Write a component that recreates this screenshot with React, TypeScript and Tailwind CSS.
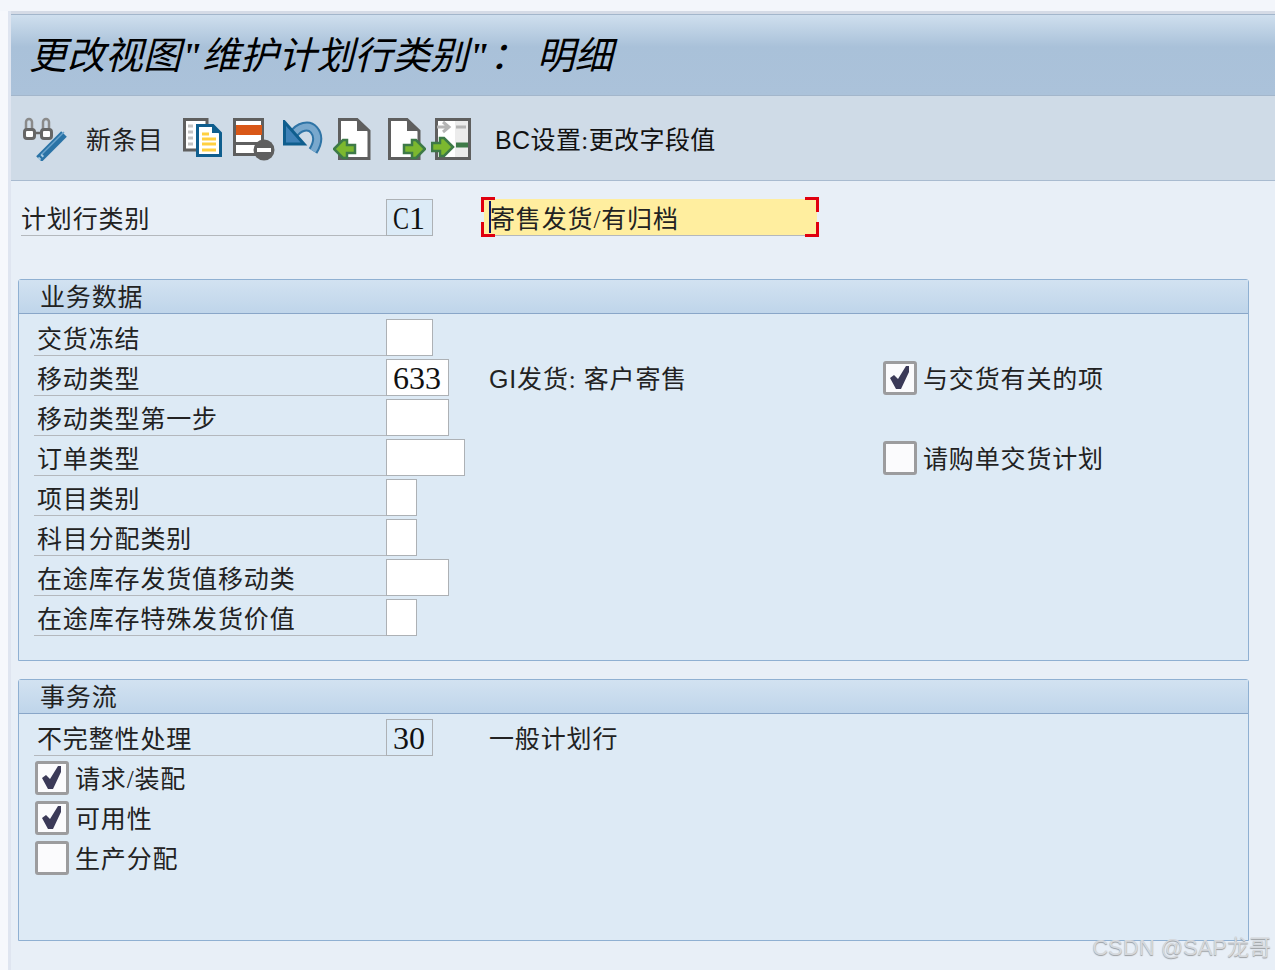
const labelLine = "border-b border-[#b4b8bd]";
const sans = "[font-family:'Liberation_Sans',sans-serif]";

function DocShape() {
  return (
    <>
      <path d="M6.5 1.5H24L36 13V40.5H6.5Z" fill="#fff" stroke="#5f5f5f" strokeWidth="3" />
      <path d="M24 1.5V13H36Z" fill="#5f5f5f" />
    </>
  );
}

function GreenArrow({ x, y, left }: { x: number; y: number; left?: boolean }) {
  const d = left
    ? "M0 11 9 2H13V7H21V15H13V20H9Z"
    : "M21 11 12 2H8V7H0V15H8V20H12Z";
  return (
    <g transform={`translate(${x} ${y})`}>
      <path d={d} fill="#7cb82f" stroke="#3e7a48" strokeWidth="2.5" />
    </g>
  );
}

function DisplayIcon() {
  return (
    <svg width="44" height="44" viewBox="0 0 44 44" className="mt-[-1px]">
      <path d="M3 12V5a3 3 0 0 1 6 0v7M20 12V5a3 3 0 0 1 6 0v7" fill="none" stroke="#8a8a8a" strokeWidth="2.5" />
      <rect x="1.5" y="12.5" width="10" height="9" rx="2.5" fill="#fff" stroke="#666" strokeWidth="3" />
      <rect x="18.5" y="12.5" width="10" height="9" rx="2.5" fill="#fff" stroke="#666" strokeWidth="3" />
      <path d="M11 16H19" stroke="#666" strokeWidth="2.5" />
      <path d="M41 17 16 42" stroke="#2a73a6" strokeWidth="8" />
      <path d="M41 15 18 38" stroke="#6aa3cc" strokeWidth="1.5" />
      <path d="M20 38 15 43" stroke="#a9cbe2" strokeWidth="3" strokeDasharray="2 2" />
    </svg>
  );
}

function CopyIcon() {
  return (
    <svg width="40" height="40" viewBox="0 0 40 40">
      <path d="M1.5 1.5H24V32H1.5Z" fill="#fff" stroke="#5f5f5f" strokeWidth="3" />
      <path d="M5 8H10M5 14H10M5 20H10M5 26H10" stroke="#c4c4c4" strokeWidth="3" />
      <path d="M14.5 7.5H30L37.5 15V37.5H14.5Z" fill="#fff" stroke="#0f5e8e" strokeWidth="3" />
      <path d="M29 6V15H38Z" fill="#0f5e8e" />
      <path d="M19 16H26M19 21H33M19 26H33M19 32H33" stroke="#ffd040" strokeWidth="3" />
    </svg>
  );
}

function DeleteIcon() {
  return (
    <svg width="43" height="43" viewBox="0 0 43 43">
      <path d="M1.5 1.5H29.5V36.5H1.5Z" fill="#fff" stroke="#5f5f5f" strokeWidth="3" />
      <rect x="3" y="7" width="26" height="10" fill="#d95717" />
      <rect x="3" y="24" width="26" height="3" fill="#5f5f5f" />
      <circle cx="31" cy="32" r="10.5" fill="#5f5f5f" />
      <rect x="24" y="30" width="14" height="4" fill="#fff" />
    </svg>
  );
}

function UndoIcon() {
  return (
    <svg width="40" height="34" viewBox="0 0 40 34" className="mt-[2px]">
      <path d="M10 15C16 6 26 4 31 10c5 6 4 13-1 21" fill="none" stroke="#2f74a6" strokeWidth="10" />
      <path d="M10 15C16 6 26 4 31 10c5 6 4 13-1 21" fill="none" stroke="#79a8cd" strokeWidth="6" />
      <path d="M1.5 2V24H21Z" fill="#3f82b8" stroke="#0f5e8e" strokeWidth="3" />
    </svg>
  );
}

function DocLeftIcon() {
  return (
    <svg width="38" height="43" viewBox="0 0 38 43">
      <DocShape />
      <GreenArrow x={1} y={20} left />
    </svg>
  );
}

function DocRightIcon() {
  return (
    <svg width="38" height="43" viewBox="0 0 38 43">
      <path d="M1.5 1.5H19L31 13V40.5H1.5Z" fill="#fff" stroke="#5f5f5f" strokeWidth="3" />
      <path d="M19 1.5V13H31Z" fill="#5f5f5f" />
      <GreenArrow x={16} y={20} />
    </svg>
  );
}

function SplitIcon() {
  return (
    <svg width="40" height="43" viewBox="0 0 40 43">
      <rect x="5.5" y="1.5" width="33" height="39" fill="#fff" stroke="#5f5f5f" strokeWidth="3" />
      <rect x="24" y="3" width="13" height="36" fill="#ececec" />
      <path d="M25 9H35" stroke="#b5b5b5" strokeWidth="3" />
      <path d="M25 27H37" stroke="#3e7a48" strokeWidth="5" />
      <path d="M6 9H16M12 4l6 5-6 5" fill="none" stroke="#b5b5b5" strokeWidth="3" />
      <GreenArrow x={1} y={18} />
    </svg>
  );
}

function Field({ width, value, readOnly }: { width: string; value?: React.ReactNode; readOnly?: boolean }) {
  return (
    <div
      className={`h-[37px] ${width} shrink-0 border border-[#adb1b5] pl-[6px] text-[32px] leading-[37px] tracking-normal text-[#111] [font-family:'Liberation_Serif',serif] ${
        readOnly ? "bg-[#dcebf7]" : "bg-white"
      }`}
    >
      {value}
    </div>
  );
}

function CheckBox({ checked }: { checked?: boolean }) {
  return (
    <div className="flex h-[34px] w-[34px] shrink-0 items-center justify-center rounded-[3px] border-[3px] border-[#9c9c9e] bg-[#fbfbfd]">
      {checked && (
        <svg width="20" height="24" viewBox="0 0 20 24">
          <path d="M0 12 4 9 8 13 16 0H19V6L11 23H6Z" fill="#3b3a58" />
        </svg>
      )}
    </div>
  );
}

function Row({
  label,
  fieldWidth,
  value,
  readOnly,
  text,
  box,
  boxLabel,
}: {
  label: string;
  fieldWidth: string;
  value?: string;
  readOnly?: boolean;
  text?: React.ReactNode;
  box?: "on" | "off";
  boxLabel?: string;
}) {
  return (
    <div className="flex h-10">
      <div className={`h-[37px] w-[352px] shrink-0 pl-[3px] leading-[41px] ${labelLine}`}>{label}</div>
      <div className="w-[103px] shrink-0">
        <Field width={fieldWidth} value={value} readOnly={readOnly} />
      </div>
      <div className="w-[394px] shrink-0 leading-[41px]">{text}</div>
      {box && (
        <div className="flex items-start gap-[6px] pt-[2px]">
          <CheckBox checked={box === "on"} />
          <span className="leading-[37px]">{boxLabel}</span>
        </div>
      )}
    </div>
  );
}

function CheckRow({ label, checked }: { label: string; checked?: boolean }) {
  return (
    <div className="flex h-10 items-start gap-[6px] pl-[1px] pt-[2px]">
      <CheckBox checked={checked} />
      <span className="leading-[37px]">{label}</span>
    </div>
  );
}

function Panel({ title, height, children }: { title: string; height: string; children: React.ReactNode }) {
  return (
    <section className={`ml-[7px] w-[1231px] ${height} rounded-t-[3px] border border-[#8fb0d2] bg-[#ddeaf5]`}>
      <h2 className="h-[34px] border-b border-[#89a6c8] bg-gradient-to-b from-[#d2e2f1] to-[#bfd5ea] pl-[21px] text-[25px] font-normal leading-[36px]">
        {title}
      </h2>
      <div className="pl-[15px] pt-[5px]">{children}</div>
    </section>
  );
}

export default function App() {
  return (
    <div className="relative h-[970px] w-[1275px] overflow-hidden bg-[#e8eff7] text-[25px] tracking-[0.85px] text-[#222] [font-family:'Liberation_Serif','Noto_Sans_CJK_SC',serif]">
      <div className="h-[11px] bg-[#f3f6fb]" />
      <div className="flex">
        <div className="h-[959px] w-2 shrink-0 bg-[#f6f8fc]" />
        <div className="h-[959px] w-[3px] shrink-0 bg-[#dfe5f0]" />
        <main className="min-w-0 flex-1">
          <div className="h-[3px] bg-[#d5dbe6]" />
          <header className="h-[82px] border-y border-[#a3b6cb] bg-gradient-to-b from-[#cfdfee] via-[#a9c1d9] via-40% to-[#abc2da] pl-[18px] text-[38px] italic leading-[82px] tracking-normal text-black">
            更改视图<b>"</b>维护计划行类别<b>"</b>： 明细
          </header>
          <nav className="flex h-[85px] items-start border-b border-[#a9bbd0] bg-[#cfdbe7] pl-[12px] pt-[22px]">
            <DisplayIcon />
            <span className="ml-[19px] w-[97px] shrink-0 leading-[45px]">新条目</span>
            <CopyIcon />
            <span className="ml-[10px]"><DeleteIcon /></span>
            <span className="ml-[7px]"><UndoIcon /></span>
            <span className="ml-[10px]"><DocLeftIcon /></span>
            <span className="ml-[17px]"><DocRightIcon /></span>
            <span className="ml-[5px]"><SplitIcon /></span>
            <span className="ml-[24px] leading-[45px] tracking-[0.4px] text-[#111]">
              <span className={sans}>BC</span>设置:更改字段值
            </span>
          </nav>

          <div className="mt-[18px] flex pl-[10px]">
            <div className={`h-[37px] w-[365px] shrink-0 leading-[41px] ${labelLine}`}>计划行类别</div>
            <Field
              width="w-[47px]"
              value={<><span className="inline-block w-[16px] origin-left scale-x-[0.75]">C</span>1</>}
              readOnly
            />
            <div className="relative ml-[51px] h-[37px] w-[333px] border-b border-[#b4b8bd] bg-[#ffee9f] pl-[6px] leading-[41px]">
              寄售发货/有归档
              <span className="absolute left-[5px] top-[2px] h-[32px] w-[2px] bg-[#0a1a6a]" />
              <span className="absolute left-[-3px] top-[-2px] h-[15px] w-[14px] border-l-[3px] border-t-[3px] border-[#e0000f]" />
              <span className="absolute bottom-[-2px] left-[-3px] h-[15px] w-[14px] border-b-[3px] border-l-[3px] border-[#e0000f]" />
              <span className="absolute right-[-2px] top-[-2px] h-[15px] w-[14px] border-r-[3px] border-t-[3px] border-[#e0000f]" />
              <span className="absolute bottom-[-2px] right-[-2px] h-[15px] w-[14px] border-b-[3px] border-r-[3px] border-[#e0000f]" />
            </div>
          </div>

          <div className="mt-[43px]">
            <Panel title="业务数据" height="h-[382px]">
              <Row label="交货冻结" fieldWidth="w-[47px]" />
              <Row
                label="移动类型"
                fieldWidth="w-[63px]"
                value="633"
                text={<><span className={sans}>GI</span>发货: 客户寄售</>}
                box="on"
                boxLabel="与交货有关的项"
              />
              <Row label="移动类型第一步" fieldWidth="w-[63px]" />
              <Row label="订单类型" fieldWidth="w-[79px]" box="off" boxLabel="请购单交货计划" />
              <Row label="项目类别" fieldWidth="w-[31px]" />
              <Row label="科目分配类别" fieldWidth="w-[31px]" />
              <Row label="在途库存发货值移动类" fieldWidth="w-[63px]" />
              <Row label="在途库存特殊发货价值" fieldWidth="w-[31px]" />
            </Panel>
          </div>

          <div className="mt-[18px]">
            <Panel title="事务流" height="h-[262px]">
              <Row label="不完整性处理" fieldWidth="w-[47px]" value="30" readOnly text="一般计划行" />
              <CheckRow label="请求/装配" checked />
              <CheckRow label="可用性" checked />
              <CheckRow label="生产分配" />
            </Panel>
          </div>
        </main>
      </div>
      <div className="absolute bottom-[8px] right-[4px] text-[22px] leading-[28px] tracking-normal text-[#d5d8dc] [font-family:'Liberation_Sans','Noto_Sans_CJK_SC',sans-serif] [text-shadow:0_1px_1px_#9a9da0]">
        CSDN @SAP龙哥
      </div>
    </div>
  );
}
